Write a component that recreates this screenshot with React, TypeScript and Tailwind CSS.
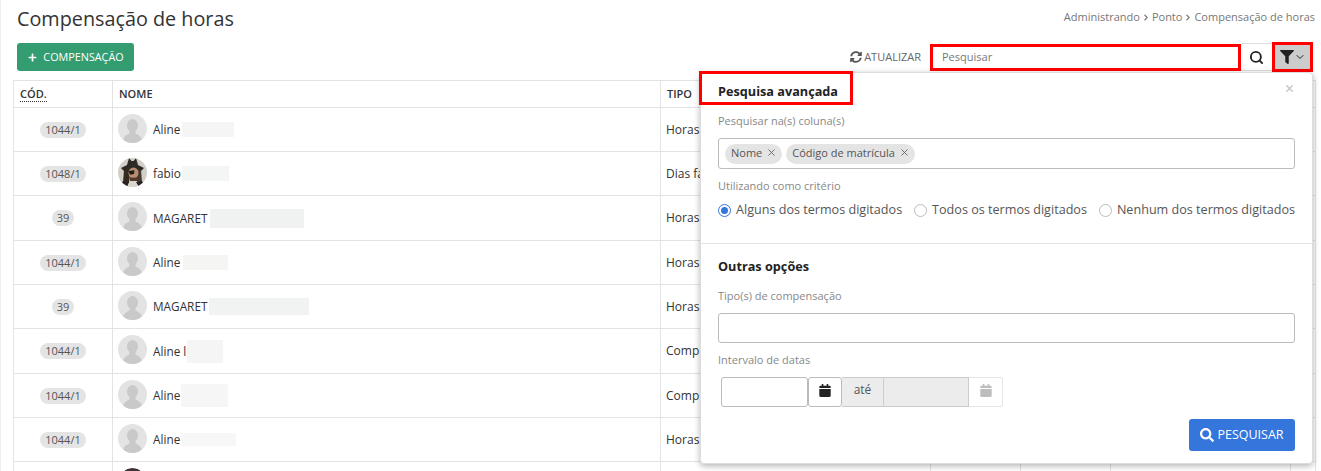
import { FaCalendar, FaChevronRight, FaFilter, FaPlus, FaSearch, FaSyncAlt } from 'react-icons/fa';
import { LuChevronDown, LuSearch, LuX } from 'react-icons/lu';

type AvatarKind = 'pirate' | 'dark';
type Row = { code?: string; name?: string; type?: string; rowH: string; blur?: string; avatar?: AvatarKind };

const rows: Row[] = [
    { code: '1044/1', name: 'Aline', type: 'Horas', rowH: 'h-[44px]', blur: 'ml-[2px] w-[52px] h-[15px] bg-[#f5f5f5]' },
    { code: '1048/1', name: 'fabio', type: 'Dias fa', rowH: 'h-[44px]', blur: 'ml-[1px] w-[47px] h-[15px] bg-[#f4f5f5]', avatar: 'pirate' },
    { code: '39', name: 'MAGARET', type: 'Horas', rowH: 'h-[45px]', blur: 'ml-[3px] w-[94px] h-[19px] bg-[#f0f1f1]' },
    { code: '1044/1', name: 'Aline', type: 'Horas', rowH: 'h-[44px]', blur: 'ml-[3px] w-[45px] h-[15px] bg-[#f5f5f3]' },
    { code: '39', name: 'MAGARET', type: 'Horas', rowH: 'h-[44px]', blur: 'ml-[2px] w-[100px] h-[17px] bg-[#f1f2f2]' },
    { code: '1044/1', name: 'Aline l', type: 'Comp', rowH: 'h-[45px]', blur: 'ml-[1px] w-[36px] h-[23px] bg-[#f5f5f5]' },
    { code: '1044/1', name: 'Aline', type: 'Comp', rowH: 'h-[44px]', blur: 'ml-[1px] w-[47px] h-[23px] bg-[#f6f6f6]' },
    { code: '1044/1', name: 'Aline', type: 'Horas', rowH: 'h-[44px]', blur: 'ml-[1px] w-[55px] h-[13px] bg-[#f7f7f7]' },
    { rowH: 'h-[44px]', avatar: 'dark' },
];

function Avatar({ kind }: { kind?: AvatarKind }) {
    if (kind === 'pirate') {
        return (
            <svg viewBox="0 0 29 29" className="w-[29px] h-[29px] rounded-full shrink-0 -mt-[3px]">
                <rect width="29" height="29" fill="#d2cfc8" />
                <g style={{ filter: 'blur(0.4px)' }}>
                    <path d="M11 0l2.500 3h2L18 0l2 7 6 3-3 3H6l-3-3 6-3z" fill="#2f2925" />
                    <path d="M6 12h6l-1 13H5z" fill="#33291f" />
                    <path d="M19 12h4l1 12h-5z" fill="#463a30" />
                    <ellipse cx="15.500" cy="15" rx="5" ry="5.500" fill="#b98d70" />
                    <path d="M10.500 13l6-.8-.5 3.800-4 .8z" fill="#1f1c1a" />
                    <path d="M11 18.500q4.500 2.500 9 0l-1.500 6h-6z" fill="#54392a" />
                    <path d="M9 29l3-6h7l3 6z" fill="#dcd8d0" />
                    <path d="M2 29l3-6 6 1-2 5zM27 29l-3-6-6 1 3 5z" fill="#2a2326" />
                    <path d="M5 29l2-3 2 3zM21 29l2-3 2 3z" fill="#a32c38" />
                </g>
            </svg>
        );
    }
    if (kind === 'dark') {
        return (
            <svg viewBox="0 0 29 29" className="w-[29px] h-[29px] rounded-full shrink-0 -mt-[3px]">
                <rect width="29" height="29" fill="#d8d6d6" />
                <ellipse cx="14.500" cy="4" rx="8" ry="4" fill="#3f3035" />
            </svg>
        );
    }
    return (
        <svg viewBox="0 0 29 29" className="w-[29px] h-[29px] rounded-full shrink-0 -mt-[3px]">
            <rect width="29" height="29" fill="#e3e3e3" />
            <ellipse cx="14.500" cy="11.500" rx="5.500" ry="6.500" fill="#c9c9c9" />
            <path d="M11.500 16h6v3.500q5.500 2 6.500 6.500v3H5v-3q1-4.500 6.500-6.500z" fill="#c9c9c9" />
        </svg>
    );
}

function TableRow({ row }: { row: Row }) {
    return (
        <div className={`flex border-b border-[#e3e3e3] ${row.rowH}`}>
            <div className="w-[99px] shrink-0 border-r border-[#e3e3e3] flex items-center justify-center">
                {row.code && (
                    <span className="h-[16px] px-[5px] rounded-full bg-[#e4e4e4] text-[11px] leading-[16px] text-[#555]">{row.code}</span>
                )}
            </div>
            <div className="w-[548px] shrink-0 border-r border-[#e3e3e3] flex items-center pl-[5px]">
                <Avatar kind={row.avatar} />
                {row.name && <span className="ml-[6px] mt-[1px] text-[11.800px] text-[#333] leading-none whitespace-pre">{row.name}</span>}
                {row.blur && <span className={row.blur} />}
            </div>
            <div className="w-[270px] shrink-0 border-r border-[#e3e3e3] flex items-center pl-[5px] text-[12px] text-[#333]">{row.type}</div>
            <div className="w-[90px] shrink-0 border-r border-[#e3e3e3]" />
            <div className="w-[90px] shrink-0 border-r border-[#e3e3e3]" />
            <div className="w-[180px] shrink-0 border-r border-[#e3e3e3]" />
            <div className="flex-1" />
        </div>
    );
}

function Chip({ label }: { label: string }) {
    return (
        <span className="h-[20px] pl-[6px] pr-[5px] rounded-full bg-[#e4e4e4] flex items-center gap-[4px] text-[11px] text-[#555]">
            {label}
            <LuX className="w-[11px] h-[11px] -mt-[2px] text-[#666]" />
        </span>
    );
}

function Radio({ label, checked }: { label: string; checked?: boolean }) {
    return (
        <label className="flex items-center gap-[5px] text-[12.600px] text-[#555] whitespace-nowrap">
            <span className={`w-[13px] h-[13px] rounded-full border flex items-center justify-center bg-white ${checked ? 'border-[#3476db]' : 'border-[#bbb]'}`}>
                {checked && <span className="w-[7px] h-[7px] rounded-full bg-[#3476db]" />}
            </span>
            {label}
        </label>
    );
}

function AdvancedSearch() {
    return (
        <div className="absolute left-[699px] top-[72px] w-[613px] h-[392px] bg-white rounded-[4px] border border-[#ddd] shadow-[0_2px_6px_rgba(0,0,0,0.3)]">
            <div className="px-[17px]">
                <div className="relative pt-[9px] h-[40px]">
                    <h3 className="text-[12.700px] font-bold text-[#222]">Pesquisa avançada</h3>
                    <LuX className="absolute right-0 top-[10px] w-[11px] h-[11px] text-[#c4c4c4]" strokeWidth={3} />
                </div>
                <p className="text-[11px] text-[#888] leading-[15px]">Pesquisar na(s) coluna(s)</p>
                <div className="mt-[10px] h-[31px] border border-[#bbb] rounded-[3px] flex items-center gap-[4px] pl-[6px]">
                    <Chip label="Nome" />
                    <Chip label="Código de matrícula" />
                </div>
                <p className="mt-[9px] text-[11px] text-[#888] leading-[15px]">Utilizando como critério</p>
                <div className="mt-[8px] flex justify-between">
                    <Radio label="Alguns dos termos digitados" checked />
                    <Radio label="Todos os termos digitados" />
                    <Radio label="Nenhum dos termos digitados" />
                </div>
            </div>
            <div className="mt-[23px] border-t border-[#e5e5e5]" />
            <div className="px-[17px]">
                <h3 className="mt-[13px] text-[12.700px] font-bold text-[#222]">Outras opções</h3>
                <p className="mt-[12px] text-[11px] text-[#888] leading-[15px]">Tipo(s) de compensação</p>
                <div className="mt-[10px] h-[30px] border border-[#bbb] rounded-[3px]" />
                <p className="mt-[9px] text-[11px] text-[#888] leading-[15px]">Intervalo de datas</p>
                <div className="mt-[10px] ml-[3px] flex h-[30px]">
                    <div className="w-[87px] border border-[#bbb] rounded-[3px]" />
                    <div className="w-[34px] pb-[2px] border border-[#bbb] rounded-[3px] flex items-center justify-center">
                        <FaCalendar className="w-[12px] h-[13px] text-[#222]" />
                    </div>
                    <div className="w-[42px] pb-[3px] border-y border-r border-[#ccc] bg-[#ececec] flex items-center justify-center text-[12px] text-[#555]">até</div>
                    <div className="w-[85px] border-y border-r border-[#ccc] bg-[#ececec]" />
                    <div className="w-[34px] pb-[2px] border-y border-r border-[#e6e6e6] rounded-r-[3px] flex items-center justify-center">
                        <FaCalendar className="w-[12px] h-[13px] text-[#bdbdbd]" />
                    </div>
                </div>
                <div className="mt-[12px] flex justify-end">
                    <button className="w-[106px] h-[32px] bg-[#3476db] rounded-[3px] text-white text-[12.500px] flex items-center justify-center gap-[3px]">
                        <FaSearch className="w-[14px] h-[14px]" />
                        PESQUISAR
                    </button>
                </div>
            </div>
        </div>
    );
}

export default function App() {
    return (
        <div className="relative h-[471px] overflow-hidden bg-white border-l border-[#eee] font-['Open_Sans',sans-serif]">
            <div className="flex items-start justify-between pl-[16px] pr-[6px] pt-[5px] h-[43px]">
                <h1 className="text-[19.800px] leading-[28px] text-[#333]">Compensação de horas</h1>
                <div className="flex items-center gap-[3px] text-[11px] leading-[24px] text-[#777]">
                    Administrando
                    <FaChevronRight className="w-[6px] h-[7px]" />
                    Ponto
                    <FaChevronRight className="w-[6px] h-[7px]" />
                    Compensação de horas
                </div>
            </div>

            <div className="flex items-center pl-[16px] pr-[8px] h-[28px]">
                <button className="w-[117px] h-[28px] pl-[1px] bg-[#339c70] rounded-[3px] text-white text-[10.800px] flex items-center justify-center gap-[6px]">
                    <FaPlus className="w-[9px] h-[9px]" />
                    COMPENSAÇÃO
                </button>
                <div className="ml-auto flex items-center text-[11px] text-[#666] gap-[2px]">
                    <FaSyncAlt className="w-[12px] h-[12px] text-[#555]" />
                    ATUALIZAR
                </div>
                <div className="ml-[9px] flex items-center h-[28px]">
                    <div className="w-[311px] h-[27px] mt-[1px] border-[3px] border-[#f00] flex items-center pl-[9px] text-[11px] text-[#777]">Pesquisar</div>
                    <div className="w-[31px] h-[28px] border-y border-[#ddd] flex items-center justify-center">
                        <LuSearch className="w-[15px] h-[15px] text-[#222]" strokeWidth={3} />
                    </div>
                    <div className="w-[41px] h-[30px] bg-[#ccc] border-[3px] border-[#f00] flex items-center justify-center">
                        <FaFilter className="w-[14px] h-[14px] text-[#222]" />
                        <LuChevronDown className="w-[12px] h-[12px] text-[#222]" />
                    </div>
                </div>
            </div>

            <div className="ml-[12px] mr-[5px] mt-[9px] border-l border-r border-t border-[#e3e3e3]">
                <div className="flex h-[27px] border-b border-[#e3e3e3] text-[11px] font-semibold text-[#333]">
                    <div className="w-[99px] shrink-0 border-r border-[#e3e3e3] flex items-center pl-[6px]">
                        <span className="border-b border-dotted border-[#333] leading-[14px]">CÓD.</span>
                    </div>
                    <div className="w-[548px] shrink-0 border-r border-[#e3e3e3] flex items-center pl-[6px]">NOME</div>
                    <div className="flex-1 flex items-center pl-[6px]">TIPO</div>
                </div>
                {rows.map((row, i) => (
                    <TableRow key={i} row={row} />
                ))}
            </div>

            <AdvancedSearch />
            <div className="absolute left-[698px] top-[71px] w-[154px] h-[34px] border-[3px] border-[#f00] pointer-events-none" />
        </div>
    );
}
